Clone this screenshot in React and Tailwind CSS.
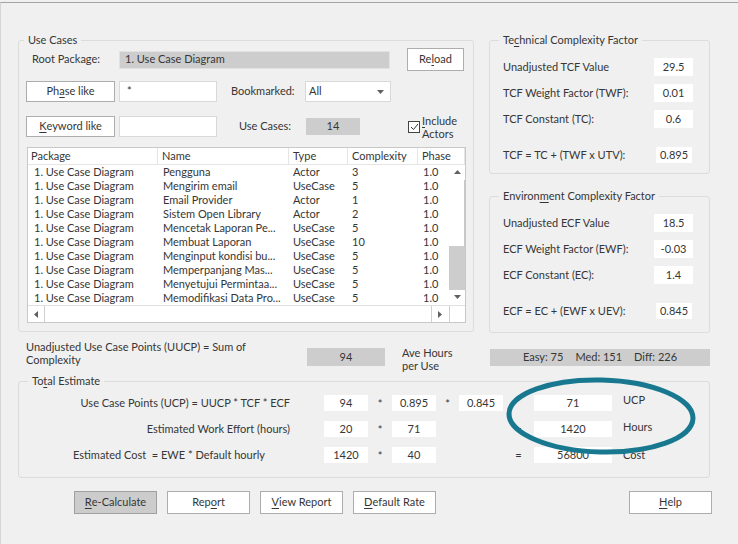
import React from "react";

const rows = [
  ["Pengguna", "Actor", "3"],
  ["Mengirim email", "UseCase", "5"],
  ["Email Provider", "Actor", "1"],
  ["Sistem Open Library", "Actor", "2"],
  ["Mencetak Laporan Pe...", "UseCase", "5"],
  ["Membuat Laporan", "UseCase", "10"],
  ["Menginput kondisi bu...", "UseCase", "5"],
  ["Memperpanjang Mas...", "UseCase", "5"],
  ["Menyetujui Permintaa...", "UseCase", "5"],
  ["Memodifikasi Data Pro...", "UseCase", "5"],
];

function U({ children }) {
  return <span className="underline underline-offset-[2px]">{children}</span>;
}

function GroupTitle({ children, ml = "ml-[5px]" }) {
  return (
    <div className={`-mt-[9px] ${ml} w-fit px-[4px] bg-[#f0f0f0] leading-[15px]`}>
      {children}
    </div>
  );
}

function Btn({ children, className = "" }) {
  return (
    <div
      className={`flex items-center justify-center border border-[#adadad] bg-white ${className}`}
    >
      {children}
    </div>
  );
}

function Arrow({ dir, className = "" }) {
  const pts = {
    up: "1,6 4.5,2 8,6",
    down: "1,2 4.5,6 8,2",
    left: "6,1 2,4.5 6,8",
    right: "2,1 6,4.5 2,8",
  }[dir];
  return (
    <svg width="9" height="9" viewBox="0 0 9 9" className={className}>
      <polygon points={pts} fill="#606060" />
    </svg>
  );
}

function FactorRow({ label, value, mt, last }) {
  return (
    <div className={`flex items-center ${mt} ${last ? "h-[16px]" : "h-[18px]"}`}>
      <div className={`pl-[13px] ${last ? "w-[166px]" : "w-[164px]"}`}>{label}</div>
      <div
        className={`bg-white flex items-center justify-center ${last ? "w-[36px] h-[16px]" : "w-[39px] h-[18px]"}`}
      >
        {value}
      </div>
    </div>
  );
}

function ValBox({ children, w = "w-[44px]" }) {
  return (
    <div className={`${w} h-[16px] bg-white flex items-center justify-center`}>{children}</div>
  );
}

export default function App() {
  return (
    <div className="w-[738px] h-[544px] overflow-hidden bg-[#f0f0f0] text-[#363636] text-[11px] font-['Lato','Liberation_Sans',sans-serif]">
      <div className="h-[2px]" />
      <div className="h-[542px] border-t border-[#a3a3a3] border-l border-l-[#d6d6d6] pl-[17px] pt-[37px]">
        {/* top section */}
        <div className="flex items-start gap-[15px]">
          {/* Use Cases */}
          <div className="w-[456px] h-[292px] border border-[#dcdcdc] rounded-[3px]">
            <GroupTitle>Use Cases</GroupTitle>
            <div className="mt-[1px] h-[23px] flex items-center">
              <div className="pl-[13px] w-[100px]">Root Package:</div>
              <div className="w-[271px] h-[18px] bg-[#cdcdcd] border border-[#e2e2e2] flex items-center pl-[5px]">
                1. Use Case Diagram
              </div>
              <Btn className="ml-[17px] w-[57px] h-[23px]">
                Re<U>l</U>oad
              </Btn>
            </div>
            <div className="mt-[9px] h-[23px] flex items-center">
              <Btn className="ml-[7px] w-[89px] h-[21px]">
                Ph<U>a</U>se like
              </Btn>
              <div className="ml-[4px] w-[98px] h-[21px] bg-white border border-[#d9d9d9] pl-[7px] leading-[18px]">
                *
              </div>
              <div className="ml-[14px] w-[74px]">Bookmarked:</div>
              <div className="w-[86px] h-[21px] bg-white border border-[#d9d9d9] flex items-center pl-[3px] pr-[6px] justify-between">
                <span>All</span>
                <svg width="7" height="4" viewBox="0 0 7 4">
                  <polygon points="0,0 7,0 3.5,4" fill="#606060" />
                </svg>
              </div>
            </div>
            <div className="mt-[12px] h-[23px] flex items-center">
              <Btn className="ml-[7px] w-[89px] h-[21px]">
                <U>K</U>eyword like
              </Btn>
              <div className="ml-[4px] w-[98px] h-[21px] bg-white border border-[#d9d9d9]" />
              <div className="ml-[22px] w-[67px]">Use Cases:</div>
              <div className="w-[54px] h-[17px] bg-[#cdcdcd] flex items-center justify-center">14</div>
              <div className="ml-[48px] w-[12px] h-[12px] bg-white border border-[#444] flex items-center justify-center">
                <svg width="9" height="8" viewBox="0 0 9 8">
                  <polyline points="1,4 3.5,6.5 8,1" fill="none" stroke="#333" strokeWidth="1" />
                </svg>
              </div>
              <div className="ml-[2px] leading-[13px]">
                <U>I</U>nclude
                <br />
                Actors
              </div>
            </div>
            {/* table */}
            <div className="mt-[9px] ml-[8px] w-[439px] h-[176px] border border-[#c8c8c8] bg-white flex flex-col">
              <div className="h-[17px] flex border-b border-[#e5e5e5]">
                <div className="w-[130px] pl-[3px] border-r border-[#e5e5e5] leading-[16px]">Package</div>
                <div className="w-[131px] pl-[4px] border-r border-[#e5e5e5] leading-[16px]">Name</div>
                <div className="w-[59px] pl-[4px] border-r border-[#e5e5e5] leading-[16px]">Type</div>
                <div className="w-[70px] pl-[4px] border-r border-[#e5e5e5] leading-[16px]">Complexity</div>
                <div className="flex-1 pl-[4px] border-r border-[#e5e5e5] leading-[16px]">Phase</div>
              </div>
              <div className="flex h-[140px]">
                <div className="w-[421px]">
                  {rows.map((r, i) => (
                    <div key={i} className="h-[14px] flex leading-[14px] whitespace-nowrap">
                      <div className="w-[130px] pl-[6px]">1. Use Case Diagram</div>
                      <div className="w-[131px] pl-[5px]">{r[0]}</div>
                      <div className="w-[59px] pl-[4px]">{r[1]}</div>
                      <div className="w-[70px] pl-[4px]">{r[2]}</div>
                      <div className="flex-1 pl-[5px]">1.0</div>
                    </div>
                  ))}
                </div>
                <div className="w-[16px] flex flex-col">
                  <div className="h-[15px] flex items-center justify-center">
                    <Arrow dir="up" />
                  </div>
                  <div className="h-[66px] border-r border-[#c8c8c8]" />
                  <div className="flex-1 bg-[#cdcdcd]" />
                  <div className="h-[15px] flex items-center justify-center">
                    <Arrow dir="down" />
                  </div>
                </div>
              </div>
              <div className="flex-1 flex border-t border-[#e0e0e0]">
                <div className="w-[17px] flex items-center justify-center border-r border-[#d0d0d0]">
                  <Arrow dir="left" />
                </div>
                <div className="w-[386px]" />
                <div className="w-[18px] flex items-center justify-center border-l border-[#d0d0d0]">
                  <Arrow dir="right" />
                </div>
                <div className="flex-1 border-l border-[#d0d0d0]" />
              </div>
            </div>
          </div>

          {/* right column */}
          <div className="w-[221px] flex flex-col">
            <div className="h-[134px] border border-[#dcdcdc] rounded-[3px]">
              <GroupTitle ml="ml-[9px]">
                Te<U>c</U>hnical Complexity Factor
              </GroupTitle>
              <FactorRow label="Unadjusted TCF Value" value="29.5" mt="mt-[11px]" />
              <FactorRow label="TCF Weight Factor (TWF):" value="0.01" mt="mt-[8px]" />
              <FactorRow label="TCF Constant (TC):" value="0.6" mt="mt-[8px]" />
              <FactorRow label="TCF = TC + (TWF x UTV):" value="0.895" mt="mt-[19px]" last />
            </div>
            <div className="mt-[22px] h-[137px] border border-[#dcdcdc] rounded-[3px]">
              <GroupTitle ml="ml-[9px]">
                Environ<U>m</U>ent Complexity Factor
              </GroupTitle>
              <FactorRow label="Unadjusted ECF Value" value="18.5" mt="mt-[11px]" />
              <FactorRow label="ECF Weight Factor (EWF):" value="-0.03" mt="mt-[8px]" />
              <FactorRow label="ECF Constant (EC):" value="1.4" mt="mt-[8px]" />
              <FactorRow label="ECF  = EC + (EWF x UEV):" value="0.845" mt="mt-[19px]" last />
            </div>
          </div>
        </div>

        {/* middle row */}
        <div className="mt-[7px] h-[32px] flex items-start">
          <div className="ml-[8px] w-[281px] leading-[13px]">
            Unadjusted Use Case Points (UUCP) = Sum of
            <br />
            Complexity
          </div>
          <div className="mt-[8px] w-[78px] h-[18px] bg-[#cdcdcd] flex items-center justify-center">94</div>
          <div className="ml-[17px] mt-[6px] w-[88px] leading-[13px]">
            Ave Hours
            <br />
            per Use
          </div>
          <div className="mt-[9px] w-[220px] h-[17px] bg-[#cdcdcd] flex items-center justify-center gap-[12px]">
            <span>Easy: 75</span>
            <span>Med: 151</span>
            <span>Diff: 226</span>
          </div>
        </div>

        {/* total estimate */}
        <div className="relative mt-[9px] w-[692px] h-[97px] border border-[#dcdcdc] rounded-[3px]">
          <GroupTitle ml="ml-[9px]">
            To<U>t</U>al Estimate
          </GroupTitle>
          <div className="mt-[6px] h-[18px] flex items-center">
            <div className="w-[271px] text-right">Use Case Points (UCP) = UUCP * TCF * ECF</div>
            <div className="w-[34px]" />
            <ValBox>94</ValBox>
            <div className="w-[24px] text-center pt-[3px]">*</div>
            <ValBox>0.895</ValBox>
            <div className="w-[23px] text-center pt-[3px]">*</div>
            <ValBox>0.845</ValBox>
            <div className="w-[31px]" />
            <ValBox w="w-[78px]">71</ValBox>
            <div className="ml-[11px] -mt-[6px]">UCP</div>
          </div>
          <div className="mt-[8px] h-[18px] flex items-center">
            <div className="w-[271px] text-right">Estimated Work Effort (hours)</div>
            <div className="w-[34px]" />
            <ValBox>20</ValBox>
            <div className="w-[24px] text-center pt-[3px]">*</div>
            <ValBox>71</ValBox>
            <div className="w-[67px]" />
            <div className="w-[31px] text-center">=</div>
            <ValBox w="w-[78px]">1420</ValBox>
            <div className="ml-[11px] -mt-[3px]">Hours</div>
          </div>
          <div className="mt-[8px] h-[18px] flex items-center">
            <div className="w-[246px] text-right">Estimated Cost&nbsp; = EWE * Default hourly</div>
            <div className="w-[59px]" />
            <ValBox>1420</ValBox>
            <div className="w-[24px] text-center pt-[3px]">*</div>
            <ValBox>40</ValBox>
            <div className="w-[67px]" />
            <div className="w-[31px] text-center">=</div>
            <ValBox w="w-[78px]">56800</ValBox>
            <div className="ml-[11px]">Cost</div>
          </div>
          <svg
            className="absolute left-[484px] top-[-8px]"
            width="196"
            height="84"
            viewBox="0 0 196 84"
          >
            <ellipse
              cx="98"
              cy="42"
              rx="92"
              ry="36"
              fill="none"
              stroke="#17788f"
              strokeWidth="5"
              transform="rotate(1.5 98 42)"
            />
          </svg>
        </div>

        {/* buttons */}
        <div className="mt-[13px] flex">
          <div className="ml-[56px] w-[83px] h-[23px] bg-[#cccccc] border border-[#a0a0a0] flex items-center justify-center">
            <U>R</U>e-Calculate
          </div>
          <Btn className="ml-[10px] w-[83px] h-[23px]">
            Rep<U>o</U>rt
          </Btn>
          <Btn className="ml-[10px] w-[83px] h-[23px]">
            <U>V</U>iew Report
          </Btn>
          <Btn className="ml-[10px] w-[83px] h-[23px]">
            <U>D</U>efault Rate
          </Btn>
          <Btn className="ml-[193px] w-[83px] h-[23px]">
            <U>H</U>elp
          </Btn>
        </div>
      </div>
    </div>
  );
}
